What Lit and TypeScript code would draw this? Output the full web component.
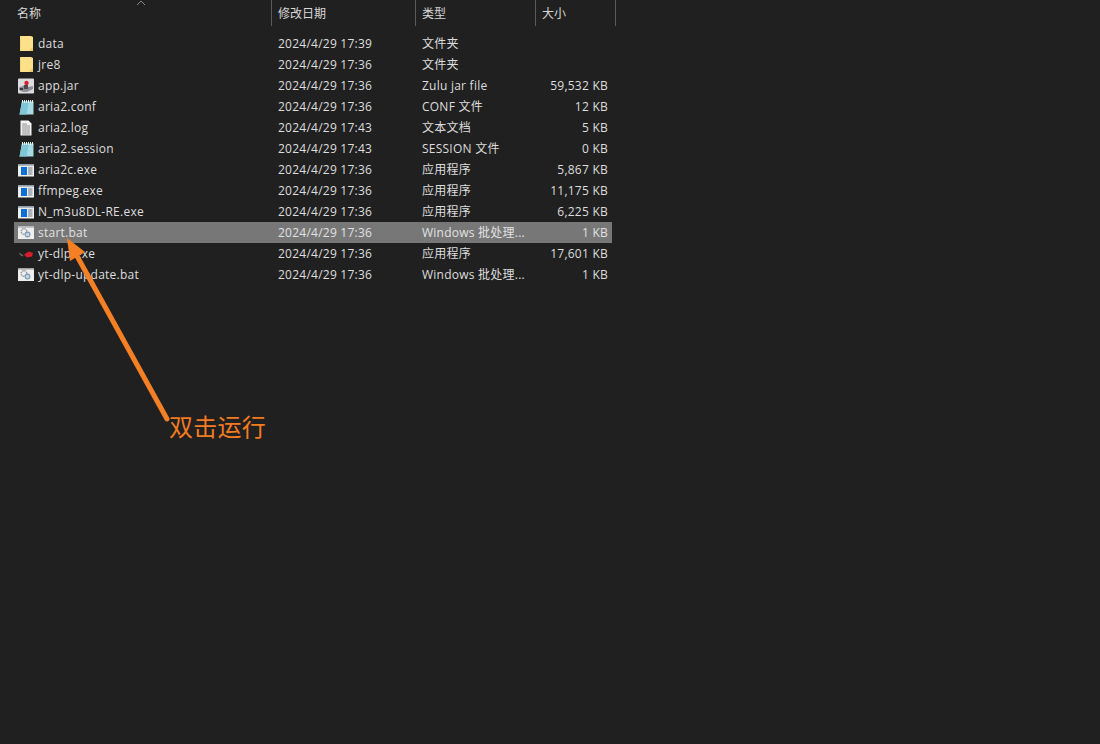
import { LitElement, html, css, svg } from "lit";
import { customElement } from "lit/decorators.js";

type Icon = "folder" | "jar" | "note" | "log" | "exe" | "bat" | "ytdlp";
interface Row { icon: Icon; name: string; date: string; type: string; size: string; sel?: boolean }

const rows: Row[] = [
  { icon: "folder", name: "data", date: "2024/4/29 17:39", type: "文件夹", size: "" },
  { icon: "folder", name: "jre8", date: "2024/4/29 17:36", type: "文件夹", size: "" },
  { icon: "jar", name: "app.jar", date: "2024/4/29 17:36", type: "Zulu jar file", size: "59,532 KB" },
  { icon: "note", name: "aria2.conf", date: "2024/4/29 17:36", type: "CONF 文件", size: "12 KB" },
  { icon: "log", name: "aria2.log", date: "2024/4/29 17:43", type: "文本文档", size: "5 KB" },
  { icon: "note", name: "aria2.session", date: "2024/4/29 17:43", type: "SESSION 文件", size: "0 KB" },
  { icon: "exe", name: "aria2c.exe", date: "2024/4/29 17:36", type: "应用程序", size: "5,867 KB" },
  { icon: "exe", name: "ffmpeg.exe", date: "2024/4/29 17:36", type: "应用程序", size: "11,175 KB" },
  { icon: "exe", name: "N_m3u8DL-RE.exe", date: "2024/4/29 17:36", type: "应用程序", size: "6,225 KB" },
  { icon: "bat", name: "start.bat", date: "2024/4/29 17:36", type: "Windows 批处理...", size: "1 KB", sel: true },
  { icon: "ytdlp", name: "yt-dlp.exe", date: "2024/4/29 17:36", type: "应用程序", size: "17,601 KB" },
  { icon: "bat", name: "yt-dlp-update.bat", date: "2024/4/29 17:36", type: "Windows 批处理...", size: "1 KB" },
];

const icons: Record<Icon, unknown> = {
  folder: svg`<path d="M2 0h11l2 1v14H2z" fill="#fde08a"/><path d="M13 0v11.5h2V15h-3.5v-2H13z" fill="#f2cd6c"/><path d="M2 0h1v15H2z" fill="#f8d679"/>`,
  jar: svg`<rect x="0" y="0.5" width="16" height="15" rx="1" fill="#dcdce0"/><path d="M1 9.5l6-2.5 3 2 5-1v3l-6 3-4 0-4-2z" fill="#8f8f95"/><rect x="6" y="7" width="4" height="4" fill="#4a4a4f"/><circle cx="8.5" cy="5" r="2.2" fill="#d8202a"/><path d="M2 10h3v2H2z" fill="#3a3a3e"/>`,
  note: svg`<path d="M4 2.5h11.5v13H1.5z" fill="#a5dbe6"/><path d="M4 2.5h7l-2.5 13h-7z" fill="#7fc6d6"/><path d="M4.5 1v3M6.5 1v3M8.5 1v3M10.5 1v3M12.5 1v3M14.5 1v3" stroke="#e8eef0" stroke-width="1"/>`,
  log: svg`<path d="M2.5 0.5h8l3 3v12h-11z" fill="#f4f4f4"/><path d="M4 4h5M4 6h8M4 8h8M4 10h8M4 12h8M4 14h8" stroke="#8d8d8d" stroke-width="1"/>`,
  exe: svg`<rect x="0" y="2.5" width="16" height="12" fill="#f0f0f0"/><rect x="0" y="2.5" width="16" height="1.6" fill="#a8b6c4"/><rect x="3" y="5" width="6" height="8" fill="#0a6fd6"/><path d="M10 6h4.5M10 8h4.5M10 10h4.5M10 12h4.5" stroke="#6a7888" stroke-width="1"/>`,
  bat: svg`<rect x="0" y="1.5" width="16" height="12.5" fill="#eeeeee"/><rect x="0" y="1.5" width="16" height="1.4" fill="#bdbdbd"/><circle cx="6" cy="6.5" r="2.8" fill="none" stroke="#8a9098" stroke-width="1.3" stroke-dasharray="1.4 0.8"/><circle cx="9.5" cy="9.5" r="2.4" fill="#c5d6e4" stroke="#7c9ab4" stroke-width="1.1"/>`,
  ytdlp: svg`<path d="M1.5 7.5l3.5 2.5" stroke="#777" stroke-width="1.3"/><path d="M6 8.5l5-3 4 1.5-1 3.5-5 1z" fill="#d81e28"/>`,
};

@customElement("app-root")
export class AppRoot extends LitElement {
  static styles = css`
    :host {
      display: block;
      position: relative;
      width: 1100px;
      height: 744px;
      overflow: hidden;
      background: #202020;
      color: #dedede;
      font-family: "Open Sans", "Noto Sans CJK SC", sans-serif;
      font-size: 12px;
      letter-spacing: 0.24px;
    }
    .head {
      display: grid;
      grid-template-columns: 258px 144px 120px 80px;
      margin-left: 14px;
      height: 33px;
      align-items: start;
    }
    .hcell {
      height: 26px;
      line-height: 27px;
      padding-left: 6px;
      border-right: 1px solid #5a5a5a;
      color: #d8d8d8;
      box-sizing: border-box;
      letter-spacing: 0;
    }
    .hcell.first { padding-left: 3px; position: relative; }
    .chev { position: absolute; left: 122px; top: 0; }
    .list { margin-left: 14px; width: 598px; display: flex; flex-direction: column; }
    .row {
      display: grid;
      grid-template-columns: 257px 144px 120px 77px;
      height: 21px;
      line-height: 21px;
      white-space: nowrap;
    }
    .row.sel { background: #777777; color: #e2e2e2; }
    .name { display: flex; align-items: center; gap: 4px; padding-left: 4px; }
    .name svg { flex: none; }
    .date { padding-left: 7px; }
    .type { padding-left: 7px; }
    .size { text-align: right; padding-right: 4px; }
    .overlay { position: absolute; inset: 0; pointer-events: none; }
    .label {
      position: absolute;
      left: 169px;
      top: 408px;
      font-size: 24px;
      line-height: 36px;
      color: #f47b20;
      font-family: "Noto Sans CJK SC", sans-serif;
    }
  `;

  render() {
    return html`
      <div class="head">
        <div class="hcell first">名称
          <svg class="chev" width="10" height="6" viewBox="0 0 10 6"><path d="M1 5l4-4 4 4" fill="none" stroke="#8a8a8a" stroke-width="1"/></svg>
        </div>
        <div class="hcell">修改日期</div>
        <div class="hcell">类型</div>
        <div class="hcell">大小</div>
      </div>
      <div class="list">
        ${rows.map(
          (r) => html`<div class="row ${r.sel ? "sel" : ""}">
            <div class="name">
              <svg width="16" height="16" viewBox="0 0 16 16">${icons[r.icon]}</svg>
              <span>${r.name}</span>
            </div>
            <div class="date">${r.date}</div>
            <div class="type">${r.type}</div>
            <div class="size">${r.size}</div>
          </div>`
        )}
      </div>
      <svg class="overlay" width="1100" height="744" viewBox="0 0 1100 744">
        <path d="M167 419L77 256" stroke="#f57f24" stroke-width="5" stroke-linecap="round" fill="none"/>
        <path d="M67 238L85 252L70 261z" fill="#f57f24"/>
      </svg>
      <div class="label">双击运行</div>
    `;
  }
}
